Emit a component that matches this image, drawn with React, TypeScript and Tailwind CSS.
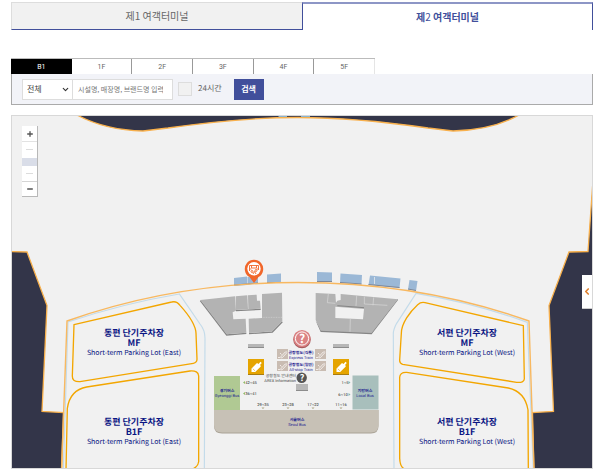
import React, { useState } from "react";
import { ChevronDown, ChevronLeft, Minus, Plus } from "lucide-react";

const floors = ["B1", "1F", "2F", "3F", "4F", "5F"];

type LabelProps = { x: number; y: number; lines: [string, string, string] };

function ParkingLabel({ x, y, lines }: LabelProps) {
  return (
    <g fill="#0a1583" textAnchor="middle">
      <text x={x} y={y} fontSize="9" fontWeight="700">{lines[0]}</text>
      <text x={x} y={y + 10} fontSize="9" fontWeight="700">{lines[1]}</text>
      <text x={x} y={y + 19} fontSize="7">{lines[2]}</text>
    </g>
  );
}

function SmallLabel({ x, y, ko, en, color = "#1c2390" }: { x: number; y: number; ko: string; en: string; color?: string }) {
  return (
    <g fill={color} textAnchor="middle" fontSize="4">
      <text x={x} y={y} fontWeight="700">{ko}</text>
      <text x={x} y={y + 5} className="font-['Roboto',sans-serif]">{en}</text>
    </g>
  );
}

function Escalator({ x, y }: { x: number; y: number }) {
  return (
    <g transform={`translate(${x} ${y})`}>
      <rect width="11" height="10" fill="#c9bcb2" />
      <path d="M1 8.5h2.2l5-5.5h2M3.8 8.8h1.4l4.6-5M3 4l1.5 1.5" fill="none" stroke="#f5f1ee" strokeWidth="0.9" />
    </g>
  );
}

function TicketSign({ x, y }: { x: number; y: number }) {
  return (
    <g transform={`translate(${x} ${y})`}>
      <rect width="16" height="16" fill="#a87c12" />
      <rect width="16" height="15" fill="#e5a400" />
      <path d="M3.500 13V9.500L9 4L10.500 5L12.500 2.800L13.800 4L12.200 5.800L12.800 7.500L7.200 13Z" fill="#fff" />
      <path d="M4.800 9.800L7 11.800" stroke="#e5a400" strokeWidth="0.600" />
    </g>
  );
}

function TerminalMap() {
  return (
    <svg
      viewBox="12 116 580 352"
      role="img"
      aria-label="제2 여객터미널 B1"
      className="block h-auto w-full bg-[#f1f1f1] font-['Noto_Sans_CJK_KR',sans-serif]"
    >
      <g fill="#333549" stroke="#f8b04c" strokeWidth="1.300">
        <path d="M77 115Q105 130 143 131L168 128C210 122 250 117.500 298 117.500S386 122 428 128L453 131Q492 130 519 115V110H77Z" />
        <path d="M10 251.500L27 252L47 305.500L42 411.500L63.500 412.500L61.500 472H10Z" />
        <path d="M593 180L588 251.500L569 252L549 305.500L553.500 411.500L532.500 412.500L534 472H595V180Z" />
      </g>
      <path d="M278.500 116h8.500M301 116h9" stroke="#8ab4d0" strokeWidth="2" />

      <g fill="none" stroke="#c3dbea" strokeWidth="3.500">
        <path transform="translate(50 280) scale(.33333)" d="M40 570L54 126Q220 70 388 42L450 132Q465 150 465 175L463 570" />
        <path transform="translate(390 280) scale(.33333)" d="M430 570L412 127Q250 68 78 40L20 130Q9 150 10 165L12 570" />
      </g>

      <g fill="#9bb8d6">
        <path d="M234 278L247 276.500V285L234 286Z" />
        <path d="M247.500 277L258 276V283L247.500 284.500Z" />
        <path d="M267 274.500L281 273.500V283H267Z" />
        <path d="M317 272L332 272.500V282H317Z" />
        <path d="M340.500 273.500L362 275L361.500 284.500L340 283Z" />
        <path d="M370 275.500L400.500 278.500L399.500 288L368.500 285Z" />
        <path d="M409.500 280L417.500 281L416 291L408 289.500Z" />
      </g>
      <path d="M234 285L247 284L258 283M267 282.500H281M317 281.500H332M340 282.500L361.500 284M368.500 284.500L399.500 287.500M408 289L416 290.500" fill="none" stroke="#7f8796" strokeWidth="1" />
      <path d="M374.500 277v7" stroke="#f1f1f1" strokeWidth="0.700" />
      <path d="M61.500 470L67 321C140 295 220 282.500 298 282.500S456 295 529 321L534 470" fill="none" stroke="#f8b860" strokeWidth="1.400" />

      <g fill="none" stroke="#f3a600" strokeWidth="4">
        <g transform="translate(50 280) scale(.33333)">
          <path d="M72 134L365 66Q380 62 390 76C410 98 437 130 438 160L441 238Q441 248 430 250L90 305Q66 306 67 288Z" />
          <path d="M48 570L52 385Q60 330 110 321L420 273Q445 271 446 288V545Q444 560 430 566" />
        </g>
        <g transform="translate(390 280) scale(.33333)">
          <path d="M400 137L105 68Q93 65 83 74C60 95 34 130 34 160L29 240Q28 250 38 253L380 307Q402 309 403 297Z" />
          <path d="M415 570L414 390Q405 335 355 324L50 277Q30 276 29 292V535Q30 560 42 566" />
        </g>
      </g>

      <g transform="translate(180 250) scale(.33333)">
        <path d="M61 152L140 255L199 250M207 251L277 246L307 215M168 182L242 178" fill="none" stroke="#858585" strokeWidth="4" />
        <g fill="#b3b3b3">
          <path d="M61 150L165 139L168 182L158 187L160 208L197 206L199 248L140 253Z" />
          <path d="M167 139L202 136L204 178L168 180Z" />
          <path d="M204 136L230 134L231 152H240L242 176L205 178Z" />
          <path d="M246 132L306 128L307 213L277 244L207 249L206 206L246 204Z" />
        </g>
        <path d="M248 202H306" stroke="#d2d2d2" strokeWidth="2" strokeDasharray="3 2" />
      </g>
      <g transform="translate(300 250) scale(.33333)">
        <path d="M47 212L62 246L215 253L294 150V146L215 240L62 235Z" fill="#858585" />
        <path fillRule="evenodd" d="M47 129L106 132L108 158L112 152L122 150V132L294 148L215 249L62 242L47 210ZM106 170L192 177L189 208L106 204Z" fill="#b3b3b3" />
        <path d="M112 167L192 173" stroke="#858585" strokeWidth="3" />
        <path d="M85 132L82 158L106 160M170 137L168 168M193 140V162M221 142L219 166M193 162L262 166M151 206L150 245" fill="none" stroke="#dadada" strokeWidth="2" />
      </g>

      <g fill="#8c8c8c">
        <rect x="248" y="344" width="16" height="4" />
        <rect x="333" y="344" width="16" height="4" />
        <rect x="296" y="384" width="12" height="7" />
      </g>
      <g fill="#b7b7b7">
        <rect x="248" y="344" width="16" height="3" />
        <rect x="333" y="344" width="16" height="3" />
        <rect x="296" y="384" width="12" height="6" />
      </g>

      <path d="M214 410H378.500V426Q378.500 433.500 371 433.500H222Q214 433.500 214 426Z" fill="#a9a296" />
      <path d="M214 410H378.500V425Q378.500 432.500 371 432.500H222Q214 432.500 214 425Z" fill="#c7c1b6" />
      <rect x="214" y="376" width="26" height="34" fill="#b0c993" />
      <rect x="352.500" y="375.500" width="26" height="34" fill="#a8bfbc" />

      <Escalator x={277} y={349} />
      <Escalator x={277} y={361} />
      <Escalator x={315} y={349} />
      <Escalator x={315} y={361} />
      <TicketSign x={248} y={359} />
      <TicketSign x={333} y={359} />

      <SmallLabel x={301} y={354} ko="공항철도(직통)" en="Express Train" />
      <SmallLabel x={301} y={366} ko="공항철도(일반)" en="All-stop Train" />
      <g fill="#444" textAnchor="end" fontSize="4">
        <text x="296" y="377">공항철도 안내센터</text>
        <text x="296" y="382" className="font-['Roboto',sans-serif]">AREX Information</text>
      </g>
      <SmallLabel x={227} y={392} ko="경기버스" en="Gyeonggi Bus" />
      <SmallLabel x={365} y={392} ko="지방버스" en="Local Bus" />
      <SmallLabel x={297} y={421} ko="서울버스" en="Seoul Bus" />

      <g fill="#222" fontSize="4" textAnchor="middle" className="font-['Roboto',sans-serif]">
        <text x="251" y="384">42~45</text>
        <text x="251" y="395">36~41</text>
        <text x="263" y="406">29~35</text>
        <text x="288" y="406">23~28</text>
        <text x="313" y="406">17~22</text>
        <text x="341" y="406">11~16</text>
        <text x="345" y="384">1~5</text>
        <text x="343" y="396">6~10</text>
      </g>
      <path d="M245 381v3l-2-1.500zM245 392v3l-2-1.500z" fill="#91bb6b" />
      <path d="M348.500 381v3l2-1.500zM348.500 393v3l2-1.500z" fill="#86b7ae" />
      <path d="M261.500 407.500h3l-1.500 1.500zM286.500 407.500h3l-1.500 1.500zM311.500 407.500h3l-1.500 1.500zM339.500 407.500h3l-1.500 1.500z" fill="#aaa17f" />

      <circle cx="302" cy="339.500" r="8.800" fill="#a85b5d" />
      <circle cx="302" cy="338.500" r="8.600" fill="#db8384" />
      <circle cx="302" cy="338.500" r="6.600" fill="none" stroke="#fff" strokeWidth="1" />
      <text x="302" y="343" fontSize="12" fontWeight="700" textAnchor="middle" fill="#fff">?</text>
      <circle cx="301.700" cy="377.700" r="5.200" fill="#555" />
      <text x="302" y="381" fontSize="9" fontWeight="700" textAnchor="middle" fill="#fff">?</text>

      <ParkingLabel x={134} y={336} lines={["동편 단기주차장", "MF", "Short-term Parking Lot (East)"]} />
      <ParkingLabel x={134} y={425} lines={["동편 단기주차장", "B1F", "Short-term Parking Lot (East)"]} />
      <ParkingLabel x={467} y={336} lines={["서편 단기주차장", "MF", "Short-term Parking Lot (West)"]} />
      <ParkingLabel x={467} y={425} lines={["서편 단기주차장", "B1F", "Short-term Parking Lot (West)"]} />

      <path d="M254 283L249.500 277A9.200 9.200 0 1 1 258.500 277Z" fill="#f1662a" />
      <circle cx="254" cy="268.800" r="6.700" fill="#fff" />
      <g fill="none" stroke="#f1662a" strokeWidth="0.900">
        <path d="M249.500 271V265.500H258.500V270M251.500 265.500v2.500h5v-2.500M249.500 269h2M256.500 269h2" />
        <circle cx="252" cy="271.500" r="1" />
        <circle cx="256" cy="270.500" r="1" />
        <path d="M253 274l1.500-2.500 1.500 2.500" />
      </g>
    </svg>
  );
}

function ZoomControl() {
  const [level, setLevel] = useState(1);
  return (
    <div className="absolute left-[10px] top-[10px] flex w-4 flex-col border-b border-r border-[#b8b8b8] bg-white text-[#555]">
      <button type="button" aria-label="확대" onClick={() => setLevel(Math.max(0, level - 1))} className="flex h-4 items-center justify-center border-b border-[#e2e2e2]">
        <Plus size={8} strokeWidth={4} />
      </button>
      <div className="flex h-[39px] flex-col justify-center">
        {[0, 1, 2].map((step) => (
          <button
            key={step}
            type="button"
            aria-label={`확대 단계 ${3 - step}`}
            onClick={() => setLevel(step)}
            className="flex h-3 items-center justify-center"
          >
            {level === step ? <span className="h-2 w-full bg-[#d9dde8]" /> : <span className="h-px w-[7px] bg-[#dcdcdc]" />}
          </button>
        ))}
      </div>
      <button type="button" aria-label="축소" onClick={() => setLevel(Math.min(2, level + 1))} className="flex h-[15px] items-center justify-center border-t border-[#d5d5d5]">
        <Minus size={8} strokeWidth={4} />
      </button>
    </div>
  );
}

export default function App() {
  const [floor, setFloor] = useState("B1");
  return (
    <main className="bg-white pb-1 pl-[11px] pr-[7px] pt-[2px] font-['Noto_Sans_CJK_KR',sans-serif] text-[#666] [text-rendering:geometricPrecision]">
      <nav className="grid h-7 grid-cols-2 text-[10px] leading-4">
        <button type="button" className="border-b border-l border-t border-b-[#414f9b] border-l-[#ddd] border-t-[#ddd] bg-[#f1f1f1]">
          제1 여객터미널
        </button>
        <button type="button" aria-current="page" className="border-x border-t-2 border-x-[#414f9b] border-t-[#8d96c6] bg-white font-bold text-[#414f9b]">
          제<span className="font-normal">2</span> 여객터미널
        </button>
      </nav>

      <div className="mt-7 grid h-4 w-[364px] grid-cols-6 border-t border-[#bbb] font-['Roboto',sans-serif] text-[7px] leading-3">
        {floors.map((name) => (
          <button
            key={name}
            type="button"
            aria-pressed={floor === name}
            onClick={() => setFloor(name)}
            className={floor === name ? "bg-black text-white" : "border-r border-[#999] last:border-[#e5e5e5]"}
          >
            {name}
          </button>
        ))}
      </div>

      <form
        onSubmit={(event) => event.preventDefault()}
        className="flex h-[31px] items-center border-x border-b border-[#aaa] bg-[#f2f3f8] pl-[10px] text-[8px] leading-3"
      >
        <div className="relative">
          <select aria-label="분류" className="block h-[21px] w-[51px] appearance-none border border-[#ddd] bg-white pl-1 text-[#444]">
            <option>전체</option>
          </select>
          <ChevronDown size={9} strokeWidth={3} className="pointer-events-none absolute right-[3px] top-[6px] text-[#333]" />
        </div>
        <input
          type="search"
          aria-label="검색어"
          placeholder="시설명, 매장명, 브랜드명 입력"
          className="h-[21px] w-[100px] border-y border-r border-[#ddd] bg-white pl-[5px] text-[7px] placeholder:text-[#777]"
        />
        <label className="ml-[5px] flex items-center gap-[6px]">
          <input type="checkbox" className="size-[14px] appearance-none border border-[#ddd] bg-[#f1f1f1] checked:bg-[#414f9b]" />
          24시간
        </label>
        <button type="submit" className="ml-3 h-[21px] w-[30px] bg-[#414f9b] font-bold text-white">
          검색
        </button>
      </form>

      <section aria-label="지도" className="relative mt-[10px] border border-[#d8d8d8]">
        <TerminalMap />
        <ZoomControl />
        <button type="button" aria-label="목록 열기" className="absolute right-0 top-[159px] flex h-[34px] w-[10px] items-center justify-center border-b border-[#ccc] bg-white text-[#df7f2c]">
          <ChevronLeft size={11} strokeWidth={4} />
        </button>
      </section>
    </main>
  );
}
